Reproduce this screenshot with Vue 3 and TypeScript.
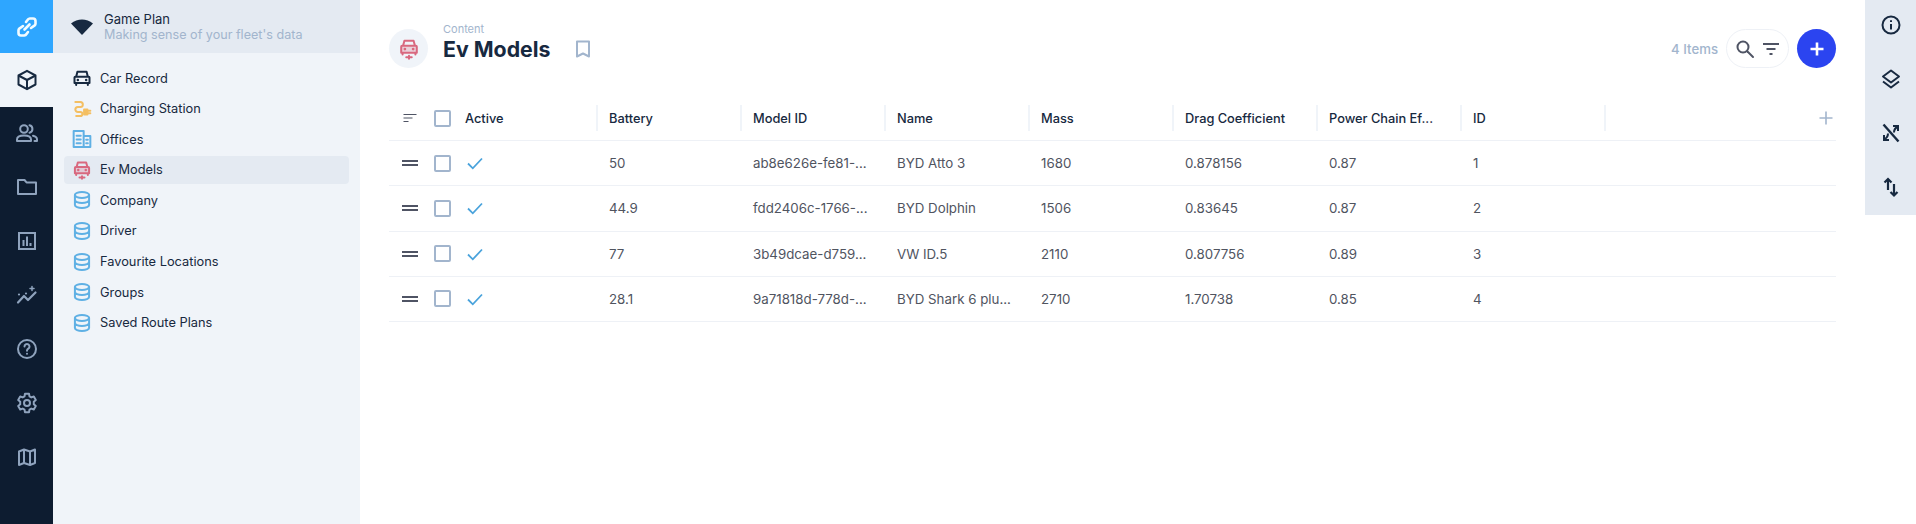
<template>
  <div class="app">
    <nav class="rail">
      <div class="logo">
        <svg viewBox="0 0 24 24" width="24" height="24" fill="none" stroke="#f2fbff" stroke-width="2.600" stroke-linecap="round" stroke-linejoin="round">
          <path d="M11 7 12.500 5a3 3 0 0 1 2.300-1.500H18A2.500 2.500 0 0 1 20.500 6v2.800a2 2 0 0 1-.8 1.600L16 13" />
          <path d="M13 17 11.500 19a3 3 0 0 1-2.300 1.500H6A2.500 2.500 0 0 1 3.500 18v-2.800a2 2 0 0 1 .8-1.600L8 11" />
          <path d="M14.500 9.500 9.500 14.500" />
        </svg>
      </div>
      <a class="rail-item rail-item--active">
        <svg viewBox="0 0 24 24" width="24" height="24" fill="none" stroke="#172940" stroke-width="2" stroke-linejoin="round">
          <path d="M12 2.800 20.500 7.500v9L12 21.200 3.500 16.500v-9z" />
          <path d="M3.500 7.500 12 12l8.500-4.500M12 12v9.200" />
        </svg>
      </a>
      <a class="rail-item">
        <svg viewBox="0 0 24 24" width="24" height="24" fill="none" stroke="#8fa3bd" stroke-width="2" stroke-linecap="round" stroke-linejoin="round">
          <circle cx="9" cy="8" r="3.800" />
          <path d="M2 20v-1.500C2 16 5 14.500 9 14.500s7 1.500 7 4V20z" />
          <path d="M14.500 4.300a3.800 3.800 0 0 1 0 7.400M18 14.800c2.500.6 4 2 4 3.700V20h-2.500" />
        </svg>
      </a>
      <a class="rail-item">
        <svg viewBox="0 0 24 24" width="24" height="24" fill="none" stroke="#8fa3bd" stroke-width="2" stroke-linejoin="round">
          <path d="M3 5h6.500l2 2.400H21V19H3z" />
        </svg>
      </a>
      <a class="rail-item">
        <svg viewBox="0 0 24 24" width="24" height="24" fill="none" stroke="#8fa3bd" stroke-width="2">
          <rect x="4" y="4" width="16" height="16" />
          <path d="M8.500 17v-6M12 17V7.500M15.500 17v-3" />
        </svg>
      </a>
      <a class="rail-item">
        <svg viewBox="0 0 24 24" width="24" height="24" fill="none" stroke="#8fa3bd" stroke-width="2.200" stroke-linecap="round" stroke-linejoin="round">
          <path d="M3 19.500 9 13l4 4 7.500-7.500" />
          <path d="M4 11.500h.01M11 10.500h.01" />
          <path d="M17 3.500v4M15 5.500h4" stroke-width="1.500" />
        </svg>
      </a>
      <a class="rail-item">
        <svg viewBox="0 0 24 24" width="24" height="24" fill="none" stroke="#8fa3bd" stroke-width="2" stroke-linecap="round">
          <circle cx="12" cy="12" r="9" />
          <path d="M9.500 9.500a2.500 2.500 0 1 1 3.800 2.100c-.9.6-1.300 1.100-1.300 2.100" />
          <path d="M12 16.800h.01" />
        </svg>
      </a>
      <a class="rail-item">
        <svg viewBox="0 0 24 24" width="24" height="24" fill="none" stroke="#8fa3bd" stroke-width="2" stroke-linejoin="round">
          <path d="m10 2.800-.5 2.600-1.800 1-2.500-.9-2 3.500 2 1.700v2.600l-2 1.700 2 3.500 2.500-.9 1.800 1 .5 2.600h4l.5-2.600 1.800-1 2.500.9 2-3.500-2-1.700v-2.600l2-1.700-2-3.500-2.500.9-1.800-1-.5-2.600z" />
          <circle cx="12" cy="12" r="3" />
        </svg>
      </a>
      <a class="rail-item">
        <svg viewBox="0 0 24 24" width="24" height="24" fill="none" stroke="#8fa3bd" stroke-width="2" stroke-linejoin="round">
          <path d="M4 6.500 9 4.500l6 2 5-2v13.500l-5 2-6-2-5 2z" />
          <path d="M9 4.500V18M15 6.500V20" />
        </svg>
      </a>
    </nav>

    <aside class="sidebar">
      <div class="project">
        <svg class="project-icon" viewBox="0 0 24 24" width="24" height="24">
          <path d="M1 8.500C7.500 3 16.500 3 23 8.500L12 20z" fill="#172940" />
        </svg>
        <div>
          <div class="project-name">Game Plan</div>
          <div class="project-sub">Making sense of your fleet's data</div>
        </div>
      </div>
      <ul class="collections">
        <li
          v-for="item in collections"
          :key="item.name"
          class="collection"
          :class="{ 'collection--active': item.name === 'Ev Models' }"
        >
          <svg viewBox="0 0 24 24" width="20" height="20" fill="none" :stroke="item.color" stroke-width="2.400" stroke-linecap="round" stroke-linejoin="round">
            <template v-if="item.icon === 'car'">
              <path d="M5 10.500 6.500 4.500h11l1.500 6M3 11.500a1 1 0 0 1 1-1h16a1 1 0 0 1 1 1V18H3zM5 18v2.500M19 18v2.500" />
              <path d="M7 14.300h.01M17 14.300h.01" stroke-width="3" />
            </template>
            <template v-else-if="item.icon === 'plug'">
              <path d="M4 3.500h6a3 3 0 0 1 0 6H7a3 3 0 0 0 0 6h3a2.500 2.500 0 0 1 0 5H5" />
              <path d="M14.500 12.500h4v6h-4z" :fill="item.color" />
              <path d="M18.500 14h3.500M18.500 17h3.500" />
            </template>
            <template v-else-if="item.icon === 'office'">
              <path d="M2 21.500V2.500h12v19M14 8.500h8v13H2" />
              <path d="M5.500 8h5M5.500 12.500h5M5.500 17h5M17 13h2M17 17h2" />
            </template>
            <template v-else-if="item.icon === 'ev'">
              <path d="M5.500 8.500 7 3h10l1.500 5.500M3.500 9.500a1 1 0 0 1 1-1h15a1 1 0 0 1 1 1V16h-17zM5 16v2M19 16v2" />
              <path d="M3.500 8.500h17V16h-17z" :fill="item.color" fill-opacity="0.25" stroke="none" />
              <path d="M7.500 12h.01M16.500 12h.01" stroke-width="3" />
              <path d="M9 21h6M12 19.500v3" />
            </template>
            <template v-else>
              <ellipse cx="12" cy="6" rx="8.500" ry="3.500" />
              <path d="M3.500 6v12c0 1.900 3.800 3.500 8.500 3.500s8.500-1.600 8.500-3.500V6M3.500 12c0 1.900 3.800 3.500 8.500 3.500s8.500-1.600 8.500-3.500" />
            </template>
          </svg>
          <span>{{ item.name }}</span>
        </li>
      </ul>
    </aside>

    <main class="main">
      <header class="head">
        <div class="head-icon">
          <svg viewBox="0 0 24 24" width="22" height="22" fill="none" stroke="#d9697f" stroke-width="2.200" stroke-linecap="round" stroke-linejoin="round">
            <path d="M5.500 8.500 7 3h10l1.500 5.500M3.500 9.500a1 1 0 0 1 1-1h15a1 1 0 0 1 1 1V16h-17zM5 16v2M19 16v2" />
            <path d="M3.500 8.500h17V16h-17z" fill="#d9697f" fill-opacity="0.25" stroke="none" />
            <path d="M7.500 12h.01M16.500 12h.01" stroke-width="3" />
            <path d="M9 21h6M12 19.500v3" />
          </svg>
        </div>
        <div class="head-titles">
          <div class="crumb">Content</div>
          <h1>Ev Models</h1>
        </div>
        <svg class="bookmark" viewBox="0 0 24 24" width="24" height="24" fill="none" stroke="#a2b5cd" stroke-width="2" stroke-linejoin="round">
          <path d="M6 4.500h12v15l-6-3-6 3z" />
        </svg>
        <div class="head-actions">
          <span class="count">4 Items</span>
          <div class="search">
            <svg viewBox="0 0 24 24" width="24" height="24" fill="none" stroke="#4f5464" stroke-width="2" stroke-linecap="round">
              <circle cx="10" cy="10" r="5.500" />
              <path d="m14.500 14.500 5.500 5.500" />
            </svg>
            <svg viewBox="0 0 24 24" width="24" height="24" fill="none" stroke="#4f5464" stroke-width="2">
              <path d="M4 7h16M7.500 12h9M10.500 17h3" />
            </svg>
          </div>
          <button class="add">
            <svg viewBox="0 0 24 24" width="24" height="24" fill="none" stroke="#fff" stroke-width="2.600">
              <path d="M12 5.500v13M5.500 12h13" />
            </svg>
          </button>
        </div>
      </header>

      <div class="table">
        <div class="row row--head">
          <div class="lead">
            <svg viewBox="0 0 16 16" width="16" height="16" fill="none" stroke="#4f5464" stroke-width="1.200">
              <path d="M1.500 4.500h13M1.500 8h9M1.500 11.500h5" />
            </svg>
            <span class="check"></span>
          </div>
          <div v-for="col in columns" :key="col" class="cell cell--head">{{ col }}</div>
          <div class="cell-add">
            <svg viewBox="0 0 16 16" width="16" height="16" fill="none" stroke="#a2b5cd" stroke-width="1.600">
              <path d="M8 1.500v13M1.500 8h13" />
            </svg>
          </div>
        </div>
        <div v-for="model in models" :key="model.id" class="row">
          <div class="lead">
            <span class="handle"></span>
            <span class="check"></span>
          </div>
          <div class="cell">
            <svg class="tick" viewBox="0 0 24 24" width="24" height="24" fill="none" stroke="#4aa3dc" stroke-width="1.800">
              <path d="m5 12.500 4.800 4.800L19 7.500" />
            </svg>
          </div>
          <div class="cell">{{ model.battery }}</div>
          <div class="cell">{{ model.modelId }}</div>
          <div class="cell">{{ model.name }}</div>
          <div class="cell">{{ model.mass }}</div>
          <div class="cell">{{ model.drag }}</div>
          <div class="cell">{{ model.power }}</div>
          <div class="cell">{{ model.id }}</div>
        </div>
      </div>
    </main>

    <aside class="tools">
      <svg viewBox="0 0 24 24" width="24" height="24" fill="none" stroke="#172940" stroke-width="2">
        <circle cx="12" cy="12" r="8.500" />
        <path d="M12 11v5.500M12 7.200v1.800" />
      </svg>
      <svg viewBox="0 0 24 24" width="24" height="24" fill="none" stroke="#172940" stroke-width="2" stroke-linejoin="round">
        <path d="m12 3.500 8 6-8 6-8-6z" />
        <path d="m4 14.500 8 6 8-6" />
      </svg>
      <svg viewBox="0 0 24 24" width="24" height="24" fill="none" stroke="#172940" stroke-width="2">
        <path d="M4.500 3.500 19.500 20.500" stroke-width="2.400" />
        <path d="M14 5h5v5M19 5.500c-3 1.500-4 3-4 6" />
        <path d="M10 19H5v-5M5 18.500c3-1.500 4-3 4-6" />
      </svg>
      <svg viewBox="0 0 24 24" width="24" height="24" fill="none" stroke="#172940" stroke-width="2.200">
        <path d="M9 15V4M5.500 7.500 9 4l3.500 3.500" />
        <path d="M15 9v11.500M11.500 17l3.500 3.500 3.500-3.500" />
      </svg>
    </aside>
  </div>
</template>

<script setup lang="ts">
interface Collection {
  name: string
  icon: string
  color: string
}

const blue = '#5fb0e4'

const collections: Collection[] = [
  { name: 'Car Record', icon: 'car', color: '#172940' },
  { name: 'Charging Station', icon: 'plug', color: '#f4bf63' },
  { name: 'Offices', icon: 'office', color: blue },
  { name: 'Ev Models', icon: 'ev', color: '#d9697f' },
  { name: 'Company', icon: 'db', color: blue },
  { name: 'Driver', icon: 'db', color: blue },
  { name: 'Favourite Locations', icon: 'db', color: blue },
  { name: 'Groups', icon: 'db', color: blue },
  { name: 'Saved Route Plans', icon: 'db', color: blue },
]

const columns = ['Active', 'Battery', 'Model ID', 'Name', 'Mass', 'Drag Coefficient', 'Power Chain Ef...', 'ID']

const models = [
  { id: 1, battery: '50', modelId: 'ab8e626e-fe81-...', name: 'BYD Atto 3', mass: 1680, drag: '0.878156', power: '0.87' },
  { id: 2, battery: '44.9', modelId: 'fdd2406c-1766-...', name: 'BYD Dolphin', mass: 1506, drag: '0.83645', power: '0.87' },
  { id: 3, battery: '77', modelId: '3b49dcae-d759...', name: 'VW ID.5', mass: 2110, drag: '0.807756', power: '0.89' },
  { id: 4, battery: '28.1', modelId: '9a71818d-778d-...', name: 'BYD Shark 6 plu...', mass: 2710, drag: '1.70738', power: '0.85' },
]
</script>

<style>
html,
body {
  margin: 0;
  background: #fff;
}
</style>

<style scoped>
.app {
  display: flex;
  height: 524px;
  overflow: hidden;
  font-family: Inter, 'Liberation Sans', sans-serif;
  font-size: 14px;
  color: #172940;
}

.rail {
  flex: 0 0 53px;
  background: #0d1c30;
}

.logo {
  height: 53px;
  background: #2ea6ff;
  display: flex;
  align-items: center;
  justify-content: center;
}

.rail-item {
  height: 54px;
  display: flex;
  align-items: center;
  justify-content: center;
}

.rail-item--active {
  background: #f0f4f9;
  margin-bottom: -1px;
}

.sidebar {
  flex: 0 0 307px;
  background: #f0f4f9;
}

.project {
  height: 53px;
  background: #e4eaf2;
  display: flex;
  align-items: center;
  padding-left: 17px;
  gap: 10px;
  line-height: 15px;
}

.project-icon {
  flex: none;
}

.project-name {
  font-size: 13px;
}

.project-sub {
  font-size: 12.6px;
  color: #a2b5cd;
}

.collections {
  list-style: none;
  margin: 0;
  padding: 11px 11px 0;
  display: flex;
  flex-direction: column;
  gap: 2.6px;
}

.collection {
  height: 28px;
  display: flex;
  align-items: center;
  gap: 8px;
  padding-left: 8px;
  border-radius: 4px;
  font-size: 12.8px;
}

.collection--active {
  background: #e4eaf2;
}

.main {
  flex: 1;
  padding: 29px 29px 0;
  min-width: 0;
}

.head {
  display: flex;
  align-items: center;
  height: 39px;
}

.head-icon {
  width: 39px;
  height: 39px;
  border-radius: 50%;
  background: #f0f4f9;
  display: flex;
  align-items: center;
  justify-content: center;
}

.head-titles {
  margin-left: 15px;
  padding-bottom: 11px;
  width: 128px;
}

.crumb {
  font-size: 11px;
  line-height: 11px;
  color: #a2b5cd;
}

h1 {
  margin: 0;
  font-size: 21.3px;
  line-height: 28px;
  font-weight: 700;
}

.head-actions {
  margin-left: auto;
  display: flex;
  align-items: center;
}

.count {
  color: #a2b5cd;
  font-size: 13.2px;
  font-weight: 500;
  margin-right: 8px;
}

.search {
  width: 63px;
  height: 39px;
  box-sizing: border-box;
  border: 1px solid #eef1f6;
  border-radius: 20px;
  display: flex;
  align-items: center;
  justify-content: center;
  gap: 2px;
}

.add {
  width: 39px;
  height: 39px;
  margin-left: 8px;
  padding: 0;
  border: 0;
  border-radius: 50%;
  background: #2b44f0;
  display: flex;
  align-items: center;
  justify-content: center;
}

.table {
  margin-top: 22px;
}

.row {
  display: grid;
  grid-template-columns: 64px repeat(8, 144px) 1fr;
  height: 45.25px;
  align-items: center;
  border-bottom: 1px solid #eef1f6;
  box-sizing: border-box;
}

.row--head {
  height: 51px;
  padding-top: 6px;
}

.lead {
  display: flex;
  align-items: center;
  padding-left: 13px;
  gap: 16px;
}

.lead svg,
.handle {
  flex: none;
  width: 16px;
}

.check {
  flex: none;
  width: 13px;
  height: 13px;
  border: 2px solid #a2b5cd;
  border-radius: 2px;
}

.handle {
  height: 2px;
  border-top: 2px solid #4f5464;
  border-bottom: 2px solid #4f5464;
}

.cell {
  padding-left: 12px;
  font-size: 13.3px;
  color: #50545f;
  display: flex;
  align-items: center;
  white-space: nowrap;
  overflow: hidden;
}

.cell--head {
  height: 26px;
  margin-right: -1px;
  font-size: 12.8px;
  color: #172940;
  font-weight: 500;
  border-right: 2px solid #f0f4f9;
}

.tick {
  margin-left: -2px;
}

.cell-add {
  display: flex;
  justify-content: flex-end;
  padding-right: 2px;
}

.tools {
  flex: 0 0 51px;
  height: 215px;
  background: #e4eaf2;
  display: flex;
  flex-direction: column;
  align-items: center;
  padding-top: 13px;
  gap: 30px;
  box-sizing: border-box;
}
</style>
